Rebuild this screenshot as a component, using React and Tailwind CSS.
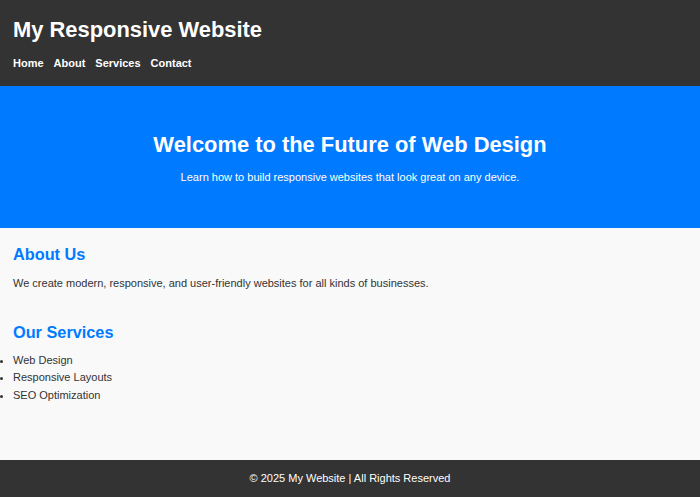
export default function App() {
  return (
    <div className="flex min-h-screen flex-col bg-[#f9f9f9] text-[#333]" style={{ fontFamily: '"Liberation Sans", Arial, sans-serif' }}>
      <header className="bg-[#333] px-[13px] pt-[17px] pb-[16px] text-white">
        <h1 className="text-[21.9px] font-bold leading-[25px]">My Responsive Website</h1>
        <nav className="mt-[15px] flex gap-[10px] text-[11px] font-bold leading-[13px]">
          <a>Home</a>
          <a>About</a>
          <a>Services</a>
          <a>Contact</a>
        </nav>
      </header>
      <section className="bg-[#007bff] px-[13px] pt-[46px] pb-[44px] text-center text-white">
        <h2 className="text-[21.9px] font-bold leading-[26px]">Welcome to the Future of Web Design</h2>
        <p className="mt-[13px] text-[11px] leading-[13px]">Learn how to build responsive websites that look great on any device.</p>
      </section>
      <main className="flex-1 px-[13px] pt-[17px]">
        <h2 className="text-[16.3px] font-bold leading-[19px] text-[#007bff]">About Us</h2>
        <p className="mt-[13px] text-[11px] leading-[13px]">We create modern, responsive, and user-friendly websites for all kinds of businesses.</p>
        <h2 className="mt-[33px] text-[16.3px] font-bold leading-[19px] text-[#007bff]">Our Services</h2>
        <ul className="mt-[10px] list-disc pl-0 text-[11px] leading-[17.3px]" style={{ listStylePosition: 'outside' }}>
          <li>Web Design</li>
          <li>Responsive Layouts</li>
          <li>SEO Optimization</li>
        </ul>
      </main>
      <footer className="flex h-[37px] items-center justify-center bg-[#333] text-[11px] text-white">
        © 2025 My Website | All Rights Reserved
      </footer>
    </div>
  );
}
